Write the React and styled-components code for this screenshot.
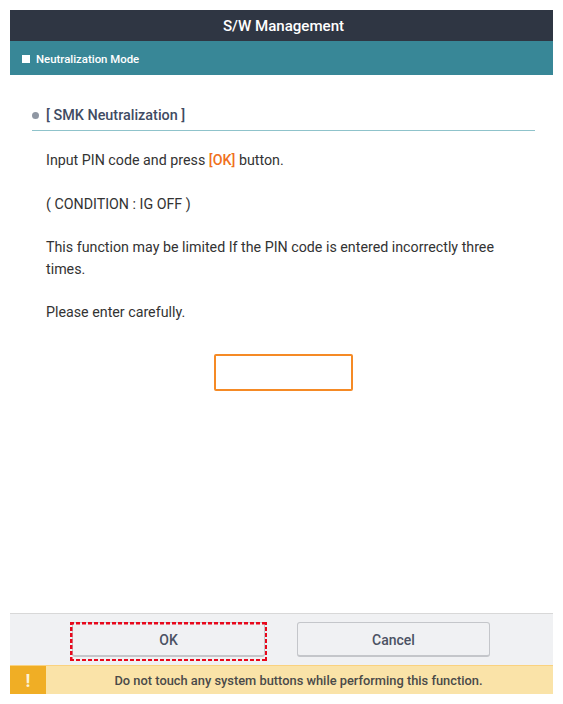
import * as React from 'react';
import styled, { createGlobalStyle } from 'styled-components';

const GlobalStyle = createGlobalStyle`
  * {
    box-sizing: border-box;
  }
  body {
    margin: 0;
    background: #ffffff;
    font-family: Roboto, "Liberation Sans", sans-serif;
  }
`;

const Page = styled.div`
  width: 563px;
  height: 704px;
  padding: 10px;
`;

const Screen = styled.div`
  width: 543px;
  height: 684px;
  display: flex;
  flex-direction: column;
  background: #ffffff;
`;

const TitleBar = styled.div`
  height: 31px;
  flex: none;
  display: flex;
  align-items: center;
  justify-content: center;
  padding-left: 4px;
  background: #2f3643;
  color: #ffffff;
  font-size: 15.1px;
  font-weight: 500;
`;

const ModeBar = styled.div`
  height: 34px;
  flex: none;
  display: flex;
  align-items: center;
  gap: 6px;
  padding: 1px 0 0 12px;
  background: #388797;
  color: #ffffff;
  font-size: 11.4px;
  font-weight: 500;
`;

const ModeMark = styled.span`
  width: 8px;
  height: 8px;
  background: #ffffff;
`;

const Content = styled.div`
  flex: 1;
  padding: 30px 18px 0 22px;
`;

const SectionHead = styled.div`
  height: 26px;
  display: flex;
  align-items: flex-start;
  gap: 7px;
  padding-top: 1px;
  border-bottom: 1px solid #8fc3cb;
  color: #3f4b63;
  font-size: 14.4px;
  font-weight: 500;
  line-height: 20px;
`;

const Bullet = styled.span`
  width: 7px;
  height: 7px;
  margin-top: 6px;
  border-radius: 50%;
  background: #8f97a3;
`;

const Body = styled.div`
  padding: 19px 10px 0 14px;
  color: #333333;
  font-size: 14.25px;
  line-height: 21.5px;
`;

const Para = styled.p`
  margin: 0 0 22px;
`;

const Accent = styled.b`
  color: #f07020;
  font-weight: 500;
`;

const PinRow = styled.div`
  display: flex;
  justify-content: center;
  padding-top: 8px;
`;

const PinInput = styled.div`
  width: 139px;
  height: 37px;
  border: 2px solid #f58a25;
  border-radius: 2px;
  background: #ffffff;
`;

const ButtonBar = styled.div`
  height: 52px;
  flex: none;
  display: flex;
  align-items: flex-start;
  gap: 30px;
  padding: 8px 0 0 59.5px;
  background: #f0f1f3;
  border-top: 1px solid #d8d8d8;
`;

const Button = styled.div`
  width: 193px;
  height: 35px;
  display: flex;
  align-items: center;
  justify-content: center;
  padding-top: 2px;
  border: 1px solid #c4c6ca;
  border-bottom-width: 2px;
  border-radius: 3px;
  background: #f0f1f3;
  color: #4b5263;
  font-size: 14px;
  font-weight: 500;
`;

// square red dots laid over the button edge, tighter than a dashed border
const Highlight = styled.div`
  position: relative;
  padding: 0 2px 4px 2.5px;

  &:after {
    content: '';
    position: absolute;
    inset: 0;
    background:
      repeating-linear-gradient(90deg, #e8081c 0 4px, transparent 4px 6px) top / 100% 2.5px no-repeat,
      repeating-linear-gradient(90deg, #e8081c 0 4px, transparent 4px 6px) bottom / 100% 2.5px no-repeat,
      repeating-linear-gradient(0deg, #e8081c 0 4px, transparent 4px 6px) left / 2.5px 100% no-repeat,
      repeating-linear-gradient(0deg, #e8081c 0 4px, transparent 4px 6px) right / 2.5px 100% no-repeat;
  }
`;

const WarnBar = styled.div`
  height: 29px;
  flex: none;
  display: flex;
  background: #fae3a8;
  border-top: 1px solid #fad27f;
`;

const WarnIcon = styled.div`
  width: 36px;
  display: flex;
  align-items: center;
  justify-content: center;
  background: #f0ae25;
  color: #fdf3d8;
  font-size: 18px;
  font-weight: 700;
`;

const WarnText = styled.div`
  flex: 1;
  display: flex;
  align-items: center;
  justify-content: center;
  padding-right: 2px;
  color: #4a4a48;
  font-size: 12.85px;
  font-weight: 500;
`;

export default function App() {
  return (
    <Page>
      <GlobalStyle />
      <Screen>
        <TitleBar>S/W Management</TitleBar>
        <ModeBar>
          <ModeMark />
          Neutralization Mode
        </ModeBar>
        <Content>
          <SectionHead>
            <Bullet />
            [ SMK Neutralization ]
          </SectionHead>
          <Body>
            <Para>
              Input PIN code and press <Accent>[OK]</Accent> button.
            </Para>
            <Para>( CONDITION : IG OFF )</Para>
            <Para>
              This function may be limited If the PIN code is entered incorrectly three times.
            </Para>
            <Para>Please enter carefully.</Para>
          </Body>
          <PinRow>
            <PinInput />
          </PinRow>
        </Content>
        <ButtonBar>
          <Highlight>
            <Button>OK</Button>
          </Highlight>
          <Button>Cancel</Button>
        </ButtonBar>
        <WarnBar>
          <WarnIcon>!</WarnIcon>
          <WarnText>Do not touch any system buttons while performing this function.</WarnText>
        </WarnBar>
      </Screen>
    </Page>
  );
}
